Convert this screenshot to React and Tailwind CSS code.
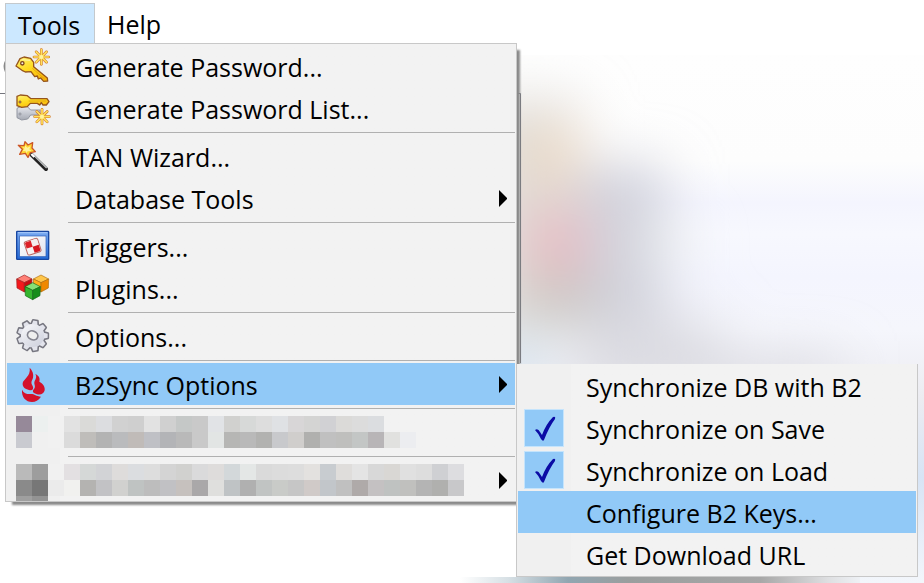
import React from "react";

const mosaicOne = [
  "968999 ecf0ef f1f1f1 e2e2e2 dadad8 dcdde0 d1d1d1 cfcfcf e2e2e2 d0d0d0 c5c8c7 c9c9c9 e1e3e6 d1d1cf d7d9d8 dddddd dfe1e4 d8d6d7 d4d4d3 d1d1d4 dbdad8 dcdcdc dbdde0",
  "c9cad0 f0f0f0 f1f1f1 dbdbdb bfbdba b3b3b3 babbbd c0bbb8 bfc0c5 b3b4b7 b9b9b9 c9c9c9 e2e5e4 b6b6b4 b9b9b9 b2b2b0 c8c9cc d0cecc b0b0ae c0c0c0 bfbfbd c3c6c5 b8b5b7 e1e1df ecedf0",
];

const mosaicTwo = [
  "bababa 9d9d9d f1f1f1 e3e0e2 d5d8d7 d2d3d6 dedcdb dbdde0 dddddd d4d4d4 d1d1cf dadadb dedcdb d3d8da e4e7e6 dadada dcdcdc dddddd e3e1df c8ccd0 dfdddb e4e4e4 d8d8d8 d9d7d4 e0e0e0 dddddd cfd0d3 dddde0",
  "8a8a8a 777777 ebebeb f1f1ef b4b3b1 c2c2c5 d1d1cf bfc3c2 bdbdbd c1c1c4 c6c1be aaa8a9 dfdfdd bfc3c5 b0b0b0 c1c4c3 c9cbc8 c6c6c6 d0cac8 c2c6ca c0c0c0 afaaa9 c4c1c2 bfc2c1 c0c0be b4b4b4 b0b0ae c8c8ca",
  "9f9f9f 939393",
];

function Burst({ x, y }) {
  const spokes = [0, 45, 90, 135, 180, 225, 270, 315];
  return (
    <g transform={`translate(${x} ${y})`}>
      {spokes.map((a) => (
        <path key={a} d="M0 -5V-22" transform={`rotate(${a})`} stroke="#cf6f1c" strokeWidth="8" strokeLinecap="round" />
      ))}
      {spokes.map((a) => (
        <path key={a} d="M0 -3V-22" transform={`rotate(${a})`} stroke="#ffe25c" strokeWidth="5" strokeLinecap="round" />
      ))}
      <circle r="6" fill="#fff3a0" />
    </g>
  );
}

function Svg({ box, children }) {
  return (
    <svg viewBox={box} className="size-9" fill="none" aria-hidden="true">
      {children}
    </svg>
  );
}

function KeyIcon() {
  return (
    <Svg box="45 144 108 108">
      <defs>
        <linearGradient id="gold" x1="0" y1="0" x2="0.6" y2="1">
          <stop offset="0" stopColor="#fff27a" />
          <stop offset="0.5" stopColor="#ffdc22" />
          <stop offset="1" stopColor="#fab80a" />
        </linearGradient>
      </defs>
      <path
        d="M60 176L72 171L92 175L101 187L101 200L142 234L143 243L131 244L122 234L115 237L112 228L104 230L93 215L76 216L66 211L48 198Z"
        fill="url(#gold)" stroke="#96551c" strokeWidth="4" strokeLinejoin="round"
      />
      <path d="M97 205L134 237" stroke="#d6960f" strokeWidth="2" />
      <path d="M65 179L90 181" stroke="#fff8b0" strokeWidth="3" />
      <circle cx="67" cy="190" r="5" fill="#f4efe6" stroke="#7d421b" strokeWidth="4" />
      <Burst x={124} y={171} />
    </Svg>
  );
}

function KeysIcon() {
  return (
    <Svg box="45 270 108 108">
      <defs>
        <linearGradient id="silver" x1="0" y1="0" x2="0" y2="1">
          <stop offset="0" stopColor="#e6e8ee" />
          <stop offset="1" stopColor="#a5a9b3" />
        </linearGradient>
      </defs>
      <path
        d="M51 325L61 320H82L92 330H120V345H92L83 357L65 360L51 353Z"
        fill="url(#silver)" stroke="#9296a1" strokeWidth="3" strokeLinejoin="round"
      />
      <circle cx="60" cy="342" r="3" fill="#f8f8f8" stroke="#858893" strokeWidth="3" />
      <path
        d="M51 289L61 285L82 287L93 296H141L147 305L139 315H129L124 308L119 315L112 310H91L82 320L65 322L51 317Z"
        fill="url(#gold)" stroke="#96551c" strokeWidth="4" strokeLinejoin="round"
      />
      <path d="M86 303H139" stroke="#d6960f" strokeWidth="2" />
      <circle cx="60" cy="306" r="3" fill="#fff" stroke="#7d421b" strokeWidth="3" />
      <Burst x={126} y={350} />
    </Svg>
  );
}

function WandIcon() {
  return (
    <Svg box="45 24 108 108">
      <path d="M94 74L138 117" stroke="#222" strokeWidth="12" strokeLinecap="round" />
      <path d="M98 73L139 113" stroke="#bfc2c3" strokeWidth="4" strokeLinecap="round" />
      <path d="M94 72L103 81" stroke="#fff" strokeWidth="7" />
      <path
        d="M75 35L84 45L98 38L96 54L106 65L91 68L84 82L76 70L59 73L67 58L55 46L72 47Z"
        fill="#ffd633" stroke="#cc5626" strokeWidth="4" strokeLinejoin="round"
      />
      <path d="M75 46L82 53L91 49L88 58L94 62L83 64L79 69L76 62L67 64L74 57L68 51L75 53Z" fill="#fff39c" />
    </Svg>
  );
}

function TriggerIcon() {
  return (
    <Svg box="45 294 108 108">
      <defs>
        <linearGradient id="frame" x1="0" y1="0" x2="0" y2="1">
          <stop offset="0" stopColor="#7aaaf1" />
          <stop offset="1" stopColor="#2369d6" />
        </linearGradient>
        <linearGradient id="pane" x1="0" y1="0" x2="1" y2="1">
          <stop offset="0" stopColor="#fff" />
          <stop offset="1" stopColor="#dfe3f0" />
        </linearGradient>
      </defs>
      <rect x="50" y="304" width="96" height="84" rx="2" fill="url(#frame)" stroke="#1746a1" strokeWidth="4" />
      <path d="M54 308H142" stroke="#a6c9fa" strokeWidth="3" />
      <rect x="59" y="318" width="79" height="62" fill="url(#pane)" stroke="#2e5db4" strokeWidth="2" />
      <g transform="rotate(-18 98 350)">
        <rect x="77" y="329" width="42" height="42" rx="5" fill="#f7f1f1" stroke="#bd6660" strokeWidth="3" />
        <path d="M79 335Q79 331 83 331H98V350H79Z" fill="#f4eeee" />
        <path d="M98 331H113Q117 331 117 335V350H98Z" fill="#f4eeee" />
        <path d="M79 335Q79 331 83 331H98V350H79Z" fill="#dd2028" />
        <path d="M98 350H117V365Q117 369 113 369H98Z" fill="#d5161f" />
      </g>
    </Svg>
  );
}

function Cube({ x, y, top, left, right, edge }) {
  return (
    <g transform={`translate(${x} ${y})`} stroke={edge} strokeWidth="2" strokeLinejoin="round">
      <path d="M0 -26L23 -14L0 -3L-23 -14Z" fill={top} />
      <path d="M-23 -14L0 -3V25L-22 13Z" fill={left} />
      <path d="M23 -14L0 -3V25L22 13Z" fill={right} />
    </g>
  );
}

function PluginsIcon() {
  return (
    <Svg box="45 30 108 108">
      <Cube x={73} y={71} top="#ff8076" left="#f3191d" right="#c90b12" edge="#9e2020" />
      <Cube x={123} y={71} top="#ffc64a" left="#ffad19" right="#ef8800" edge="#ad6c10" />
      <Cube x={98} y={94} top="#86df76" left="#35b52e" right="#168d1b" edge="#166a1b" />
    </Svg>
  );
}

function GearIcon() {
  const teeth = [10, 50, 90, 130, 170, 210, 250, 290, 330];
  return (
    <Svg box="45 174 108 108">
      <defs>
        <linearGradient id="steel" gradientUnits="userSpaceOnUse" x1="65" y1="185" x2="130" y2="270">
          <stop offset="0" stopColor="#fbfbfd" />
          <stop offset="1" stopColor="#c9ccd9" />
        </linearGradient>
      </defs>
      {teeth.map((a) => (
        <path key={a} d="M87 197L91 181H105L109 197Z" transform={`rotate(${a} 98 227)`} stroke="#777781" strokeWidth="7" strokeLinejoin="round" />
      ))}
      <circle cx="98" cy="227" r="37" fill="url(#steel)" stroke="#777781" strokeWidth="4" />
      {teeth.map((a) => (
        <path key={a} d="M88 199L92 182H104L108 199Z" transform={`rotate(${a} 98 227)`} fill="#e3e4ec" />
      ))}
      <circle cx="98" cy="227" r="34" fill="url(#steel)" />
      <ellipse cx="98" cy="226" rx="16" ry="13" transform="rotate(25 98 226)" fill="#efefef" stroke="#858590" strokeWidth="5" />
    </Svg>
  );
}

function FlameIcon() {
  return (
    <Svg box="45 318 108 108">
      <g fill="#d4112b">
        <path d="M89 323C101 335 102 350 96 361C93 368 94 372 98 378C102 386 98 393 87 390C75 388 67 381 68 370C69 357 93 350 89 323Z" />
        <path d="M106 342C119 348 120 357 118 365C128 370 136 380 134 391C132 402 121 406 109 402C98 399 96 394 102 387C109 378 100 373 104 363C108 355 111 350 106 342Z" />
        <path d="M66 389C72 401 82 403 93 402C104 402 108 409 123 410C115 421 107 426 96 426C78 426 64 411 66 389Z" />
      </g>
    </Svg>
  );
}

function Arrow() {
  return (
    <svg viewBox="0 0 8 17" className="mr-2 h-[17px] w-2 shrink-0" aria-hidden="true">
      <path d="M0 0L8 8V9L0 17Z" fill="#000" />
    </svg>
  );
}

function Item({ icon, label, arrow, active }) {
  return (
    <button
      type="button"
      role="menuitem"
      className={`flex h-[42px] w-full items-center pl-2 text-left ${active ? "bg-[#91c9f7]" : ""}`}
    >
      <span className="w-[60px] shrink-0">{icon}</span>
      <span className="grow pt-0.5">{label}</span>
      {arrow && <Arrow />}
    </button>
  );
}

function Separator() {
  return <div role="separator" className="mt-[3px] mb-0.5 ml-[61px] h-px bg-[#b0b0b0]" />;
}

function Redacted({ rows, arrow, label }) {
  return (
    <button type="button" role="menuitem" aria-label={label} className="flex h-[42px] w-full items-center overflow-hidden pl-[9px]">
      <span className="flex h-full grow flex-col pt-[5px]">
        {rows.map((row, i) => (
          <span key={i} className="flex h-4 shrink-0">
            {row.split(" ").map((c, j) => (
              <span key={j} className="size-4" style={{ backgroundColor: `#${c}` }} />
            ))}
          </span>
        ))}
      </span>
      {arrow && <Arrow />}
    </button>
  );
}

function CheckItem({ label }) {
  return (
    <label className="flex h-[42px] items-center pl-1.5">
      <span className="mr-[22px] grid shrink-0">
        <input
          type="checkbox"
          defaultChecked
          className="col-start-1 row-start-1 h-[38px] w-10 appearance-none border border-[#c5e4fc] bg-[#91c9f7]"
        />
        <svg viewBox="0 0 40 38" className="pointer-events-none col-start-1 row-start-1 h-[38px] w-10" aria-hidden="true">
          <path d="M11 21Q14 19 16 23L18 26Q22 15 29 8Q32 7 31 10Q25 18 20 31Q19 33 17 30Q15 25 11 21Z" fill="#0b0ba5" />
        </svg>
      </span>
      <span className="pt-0.5">{label}</span>
    </label>
  );
}

function Backdrop() {
  return (
    <div className="absolute inset-0 overflow-hidden" aria-hidden="true">
      <svg viewBox="0 0 924 583" className="h-[583px] w-[924px]">
        <defs>
          <filter id="soft" x="-100%" y="-100%" width="300%" height="300%">
            <feGaussianBlur stdDeviation="27" />
          </filter>
          <linearGradient id="wash" x1="0" y1="0" x2="0" y2="1">
            <stop offset="0" stopColor="#fefefe" />
            <stop offset="0.2" stopColor="#fdfdfd" />
            <stop offset="0.28" stopColor="#f4f5fe" />
            <stop offset="0.34" stopColor="#f7f8fe" />
            <stop offset="0.42" stopColor="#f4f5fe" />
            <stop offset="0.52" stopColor="#f5f6fc" />
            <stop offset="0.65" stopColor="#ececf1" />
            <stop offset="0.8" stopColor="#d7e4f5" />
            <stop offset="1" stopColor="#f3f6fb" />
          </linearGradient>
          <linearGradient id="band">
            <stop offset="0" stopColor="#fff" />
            <stop offset="0.12" stopColor="#d7e0e5" />
            <stop offset="0.27" stopColor="#91a6b1" />
            <stop offset="0.42" stopColor="#9a9e9e" />
            <stop offset="0.75" stopColor="#a7a7a7" />
            <stop offset="0.92" stopColor="#dedfe1" />
            <stop offset="1" stopColor="#eef1f5" />
          </linearGradient>
          <clipPath id="area">
            <rect x="520" y="55" width="404" height="528" />
          </clipPath>
        </defs>
        <g clipPath="url(#area)">
          <rect x="520" y="55" width="404" height="528" fill="url(#wash)" />
          <g filter="url(#soft)">
            <rect x="480" y="100" width="100" height="235" fill="#dedcd8" />
            <rect x="580" y="165" width="85" height="185" fill="#d1d2db" />
            <rect x="580" y="320" width="140" height="80" fill="#dcdce2" />
            <rect x="720" y="358" width="120" height="40" fill="#dcdce2" />
            <ellipse cx="552" cy="155" rx="30" ry="30" fill="#f0dbc4" />
            <ellipse cx="556" cy="242" rx="32" ry="37" fill="#eabac1" />
            <ellipse cx="560" cy="298" rx="38" ry="22" fill="#c6c3bd" />
            <ellipse cx="664" cy="245" rx="28" ry="18" fill="#e9ecee" />
            <ellipse cx="515" cy="362" rx="25" ry="20" fill="#c2dcec" />
          </g>
        </g>
        <rect x="460" y="577" width="400" height="6" fill="url(#band)" />
        <path d="M0 93.500H520.500V363" fill="none" stroke="#74757d" />
        <path d="M6 61Q3 66 6 72" fill="none" stroke="#888" strokeWidth="2" />
      </svg>
    </div>
  );
}

export default function App() {
  return (
    <main className="relative min-h-screen overflow-hidden bg-white font-['Open_Sans','Noto_Sans',sans-serif] text-[25px] leading-[34px] text-black">
      <Backdrop />
      <nav className="relative flex pt-[3px] pl-[5px]" role="menubar">
        <button type="button" role="menuitem" className="h-10 border border-b-0 border-[#c4c9cd] bg-[#cce8ff] pr-3.5 pl-3 pt-0.5">
          Tools
        </button>
        <button type="button" role="menuitem" className="h-10 px-3 pt-0.5">
          Help
        </button>
      </nav>
      <div
        role="menu"
        aria-label="Tools"
        className="relative ml-[5px] w-[512px] border border-[#c8c8c8] bg-[#f2f2f2] bg-linear-to-r from-[#f0f0f0] from-[54px] to-[#f2f2f2] to-[54px] p-px pb-0 shadow-[5px_5px_2px_-2px_#8a8a8a]"
      >
        <Item icon={<KeyIcon />} label="Generate Password..." />
        <Item icon={<KeysIcon />} label="Generate Password List..." />
        <Separator />
        <Item icon={<WandIcon />} label="TAN Wizard..." />
        <Item label="Database Tools" arrow />
        <Separator />
        <Item icon={<TriggerIcon />} label="Triggers..." />
        <Item icon={<PluginsIcon />} label="Plugins..." />
        <Separator />
        <Item icon={<GearIcon />} label="Options..." />
        <Separator />
        <div className="relative">
          <Item icon={<FlameIcon />} label="B2Sync Options" arrow active />
          <div
            role="menu"
            aria-label="B2Sync Options"
            className="absolute top-px left-full ml-px w-[402px] border border-t-0 border-[#c8c8c8] bg-linear-to-r from-[#f0f0f0] from-[54px] to-[#f2f2f2] to-[54px] px-px pt-px pb-px"
          >
            <Item label="Synchronize DB with B2" />
            <CheckItem label="Synchronize on Save" />
            <CheckItem label="Synchronize on Load" />
            <Item label="Configure B2 Keys..." active />
            <Item label="Get Download URL" />
          </div>
        </div>
        <Separator />
        <Redacted rows={mosaicOne} label="Redacted plugin" />
        <Separator />
        <Redacted rows={mosaicTwo} label="Redacted plugin menu" arrow />
      </div>
    </main>
  );
}
